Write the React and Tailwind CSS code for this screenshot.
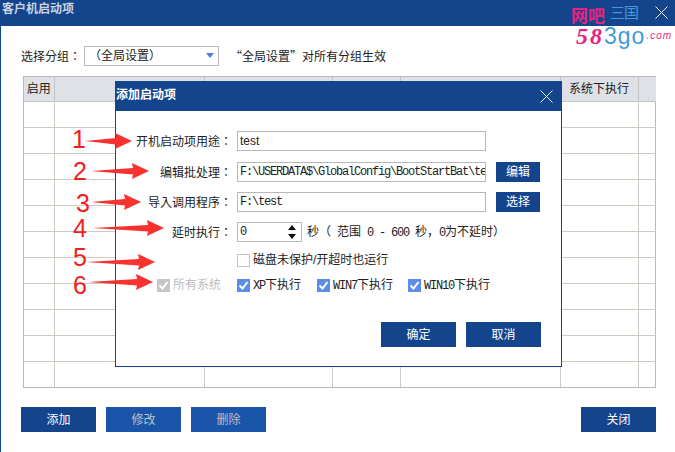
import React from 'react';

const columns = [30, 150, 128, 68, 160, 78, 18];
const rows = [...Array(11)];

// red hand-drawn arrows and numbers laid over the screenshot
const marks = [
    { n: '1', nx: 71, ny: 124, x1: 85, x2: 132, y: 141 },
    { n: '2', nx: 72, ny: 156, x1: 91, x2: 149, y: 171 },
    { n: '3', nx: 75, ny: 188, x1: 91, x2: 141, y: 202 },
    { n: '4', nx: 72, ny: 213, x1: 92, x2: 164, y: 228 },
    { n: '5', nx: 72, ny: 242, x1: 86, x2: 155, y: 262 },
    { n: '6', nx: 72, ny: 270, x1: 88, x2: 153, y: 282 },
];

const arrowPoints = (x1, x2, y) => {
    const neck = x2 - 16;
    return `${x1},${y} ${neck},${y - 3} ${neck - 1},${y - 8} ${x2},${y} ${neck - 1},${y + 8} ${neck},${y + 3.5}`;
};

const CloseIcon = ({ size }) => (
    <svg width={size} height={size} viewBox="0 0 13 13" fill="none" stroke="#e8eef8" strokeWidth="1">
        <path d="M0.5 0.5L12.5 12.5M12.5 0.5L0.5 12.5" />
    </svg>
);

const Checkbox = ({ checked, disabled }) => {
    const tone = !checked ? 'bg-white border border-[#c4c4c4]' : disabled ? 'bg-[#c6c6c6]' : 'bg-[#5b8ee8]';
    return (
        <span className={`w-[13px] h-[13px] shrink-0 flex items-center justify-center ${tone}`}>
            {checked && (
                <svg width="11" height="11" viewBox="0 0 11 11" fill="none" stroke="white" strokeWidth="2">
                    <path d="M1.5 5.5L4.5 8.5L9.5 2" />
                </svg>
            )}
        </span>
    );
};

const Button = ({ children, disabled, size = 'h-[25px] w-[75px]', className = '' }) => (
    <button className={`flex items-center justify-center text-xs ${size} ${disabled ? 'bg-[#1a55a9] text-[#b9c0c8]' : 'bg-[#14458c] text-white'} ${className}`}>{children}</button>
);

// latin in the old dialog font is 6px wide but as tall as the CJK around it
const Mono = ({ children }) => (
    <span className="font-['Liberation_Mono',monospace] text-[12px] tracking-[-1.2px] whitespace-pre">{children}</span>
);

const Field = ({ children, className = '' }) => (
    <div className={`h-[20px] border border-[#b8b8b8] bg-white flex items-center px-[2px] text-[#222] overflow-hidden whitespace-nowrap ${className}`}>{children}</div>
);

const FormRow = ({ label, children, className = '' }) => (
    <div className={`flex items-center h-[20px] ${className}`}>
        <div className="w-[116px] text-right text-[#222] mr-[5px] font-['Noto_Sans_CJK_TC',sans-serif]">{label}</div>
        {children}
    </div>
);

const Logo = () => (
    <div className="absolute left-[570px] top-[5px] w-[104px] leading-none">
        <div className="flex h-[21px]">
            <span className="text-[17px] font-bold text-[#e6247f] mt-[3px]">网吧</span>
            <span className="text-[15px] text-[#3f9bdc] ml-[5px] tracking-[-1px]">三国</span>
        </div>
        <div className="flex items-center h-[20px] ml-[5px]">
            <span className="text-[24px] leading-[20px] font-bold italic tracking-[2px] text-[#e6247f] font-['Liberation_Serif',serif]">58</span>
            <span className="text-[23px] leading-[20px] tracking-[1px] text-[#3f9bdc] font-['Liberation_Sans',sans-serif]">3go</span>
            <span className="text-[10px] leading-[20px] italic tracking-[1px] text-[#e6247f] ml-[1px] font-['Liberation_Sans',sans-serif]">.com</span>
        </div>
    </div>
);

const App = () => {
    return (
        <div className="relative w-[675px] h-[452px] overflow-hidden bg-white border-l border-[#14458c] text-xs font-['Liberation_Sans','Noto_Sans_CJK_SC',sans-serif]">
            <div className="h-[26px] bg-[#14458c] flex items-center justify-between pl-[1px] pr-[7px] pb-[8px]">
                <span className="font-bold text-[#c9d2df]">客户机启动项</span>
                <span className="mt-[6px]"><CloseIcon size={13} /></span>
            </div>

            <div className="flex items-center mt-[20px] ml-[20px] h-[19px] text-[#222]">
                <span className="w-[63px] font-['Noto_Sans_CJK_TC',sans-serif]">选择分组：</span>
                <div className="w-[135px] h-[20px] border border-[#b8b8b8] flex items-center justify-between pl-[4px] pr-[4px]">
                    <span>（全局设置）</span>
                    <svg width="8" height="5" viewBox="0 0 8 5"><path d="M0 0H8L4 5Z" fill="#4a7fe0" /></svg>
                </div>
                <span className="ml-[11px] font-['Noto_Sans_CJK_SC',sans-serif]">“全局设置”对所有分组生效</span>
            </div>

            <div className="ml-[22px] mt-[11px] w-[633px] border border-[#b8b8b8]">
                <table className="w-full table-fixed border-collapse text-[#222]">
                    <colgroup>
                        {columns.map((w, i) => <col key={i} style={{ width: w }} />)}
                    </colgroup>
                    <thead>
                        <tr className="h-[24px] bg-[#dee1e6]">
                            {['启用', '', '', '', '', '系统下执行', ''].map((h, i) => (
                                <th key={i} className="font-normal text-center border-r border-b border-[#c4c4c4] last:border-r-0 p-0">{h}</th>
                            ))}
                        </tr>
                    </thead>
                    <tbody>
                        {rows.map((_, r) => (
                            <tr key={r} className="h-[26px]">
                                {columns.map((_, c) => (
                                    <td key={c} className={`border-r border-[#cdcbc4] last:border-r-0 p-0 ${r < 10 ? 'border-b' : ''}`}></td>
                                ))}
                            </tr>
                        ))}
                    </tbody>
                </table>
            </div>

            <div className="flex mt-[19px] ml-[20px] w-[635px]">
                <Button>添加</Button>
                <Button disabled className="ml-[10px]">修改</Button>
                <Button disabled className="ml-[10px]">删除</Button>
                <Button className="ml-auto">关闭</Button>
            </div>

            <Logo />

            <div className="absolute left-[114px] top-[81px] w-[447px] h-[286px] bg-white border border-[#14458c] flex flex-col">
                <div className="h-[29px] shrink-0 bg-[#14458c] flex items-center justify-between pr-[8px]">
                    <span className="font-bold text-white pb-[3px]">添加启动项</span>
                    <CloseIcon size={13} />
                </div>
                <div className="flex flex-col pt-[20px]">
                    <FormRow label="开机启动项用途：">
                        <Field className="w-[249px]">test</Field>
                    </FormRow>
                    <FormRow label="编辑批处理：" className="mt-[11px]">
                        <Field className="w-[249px]"><Mono>F:\USERDATA$\GlobalConfig\BootStartBat\te</Mono></Field>
                        <Button size="w-[44px] h-[20px]" className="ml-[10px]">编辑</Button>
                    </FormRow>
                    <FormRow label="导入调用程序：" className="mt-[10px]">
                        <Field className="w-[249px]"><Mono>F:\test</Mono></Field>
                        <Button size="w-[44px] h-[20px]" className="ml-[10px]">选择</Button>
                    </FormRow>
                    <FormRow label="延时执行：" className="mt-[10px]">
                        <Field className="w-[65px] justify-between pr-[5px]">
                            <Mono>0</Mono>
                            <svg width="8" height="14" viewBox="0 0 8 14" fill="#111"><path d="M4 0L8 5H0ZM0 9H8L4 14Z" /></svg>
                        </Field>
                        <span className="ml-[5px] text-[#222] whitespace-pre">秒（<Mono> </Mono>范围<Mono> 0 - 600 </Mono>秒，<Mono>0</Mono>为不延时）</span>
                    </FormRow>
                    <FormRow label="" className="mt-[8px]">
                        <div className="flex items-center text-[#222]">
                            <Checkbox />
                            <span className="ml-[3px]">磁盘未保护/开超时也运行</span>
                        </div>
                    </FormRow>
                    <div className="flex items-center h-[20px] mt-[5px] text-[#222]">
                        <div className="flex items-center w-[121px] pl-[41px] text-[#bbbbbb]">
                            <Checkbox checked disabled />
                            <span className="ml-[3px]">所有系统</span>
                        </div>
                        <div className="flex items-center w-[80px]">
                            <Checkbox checked />
                            <span className="ml-[3px]"><Mono>XP</Mono>下执行</span>
                        </div>
                        <div className="flex items-center w-[91px]">
                            <Checkbox checked />
                            <span className="ml-[3px]"><Mono>WIN7</Mono>下执行</span>
                        </div>
                        <div className="flex items-center">
                            <Checkbox checked />
                            <span className="ml-[3px]"><Mono>WIN10</Mono>下执行</span>
                        </div>
                    </div>
                </div>
                <div className="flex justify-end gap-[10px] mt-[27px] pr-[20px]">
                    <Button>确定</Button>
                    <Button>取消</Button>
                </div>
            </div>

            <svg className="absolute left-0 top-0 pointer-events-none" width="675" height="452">
                {marks.map(m => <polygon key={m.n} points={arrowPoints(m.x1 - 1, m.x2 - 1, m.y)} fill="#f9312f" />)}
            </svg>
            {marks.map(m => (
                <span key={m.n} className="absolute text-[25px] leading-[30px] text-[#f0201c]" style={{ left: m.nx, top: m.ny }}>{m.n}</span>
            ))}
        </div>
    );
};

export default App;
